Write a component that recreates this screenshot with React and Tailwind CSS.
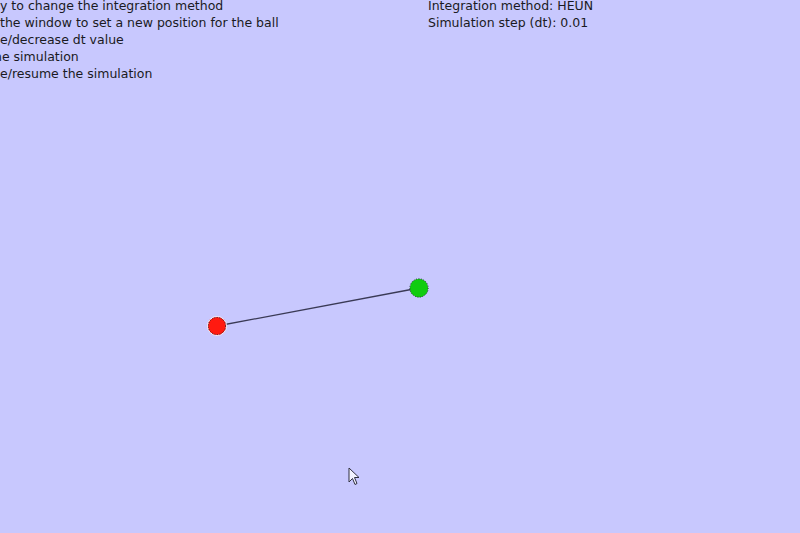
export default function App() {
  return (
    <div
      className="relative w-[800px] h-[533px] overflow-hidden bg-[#c8c8fe] text-[#1a1a22] text-[12.5px] leading-[17px]"
      style={{ fontFamily: '"DejaVu Sans", "Noto Sans", sans-serif' }}
    >
      {/* HUD text */}
      <div className="flex -mt-[3px]">
        <div className="flex flex-col w-[428px] whitespace-nowrap">
          <div>y to change the integration method</div>
          <div>the window to set a new position for the ball</div>
          <div>e/decrease dt value</div>
          <div className="-ml-[6px]">he simulation</div>
          <div>e/resume the simulation</div>
        </div>
        <div className="flex flex-col whitespace-nowrap">
          <div>Integration method: HEUN</div>
          <div>Simulation step (dt): 0.01</div>
        </div>
      </div>

      {/* pendulum scene */}
      <svg className="absolute inset-0" width="800" height="533" viewBox="0 0 800 533">
        <line x1="217" y1="326" x2="419" y2="288" stroke="#3a3a55" strokeWidth="1.3" />
        <circle cx="217" cy="326" r="9.5" fill="#ff1a10" stroke="#f4f4ff" strokeWidth="1" />
        <circle cx="217" cy="326" r="8.6" fill="none" stroke="#202030" strokeWidth="0.9" strokeDasharray="1 1.5" />
        <circle cx="419" cy="288" r="9.2" fill="#10cc10" stroke="#202030" strokeWidth="0.9" strokeDasharray="1 1.5" />
        {/* mouse cursor */}
        <path
          d="M349 468 L349 482 L352.5 478.5 L355 484.5 L357 483.5 L354.5 477.5 L359 477.5 Z"
          fill="#f2f2ff"
          stroke="#303040"
          strokeWidth="1"
          strokeLinejoin="round"
        />
      </svg>
    </div>
  );
}
